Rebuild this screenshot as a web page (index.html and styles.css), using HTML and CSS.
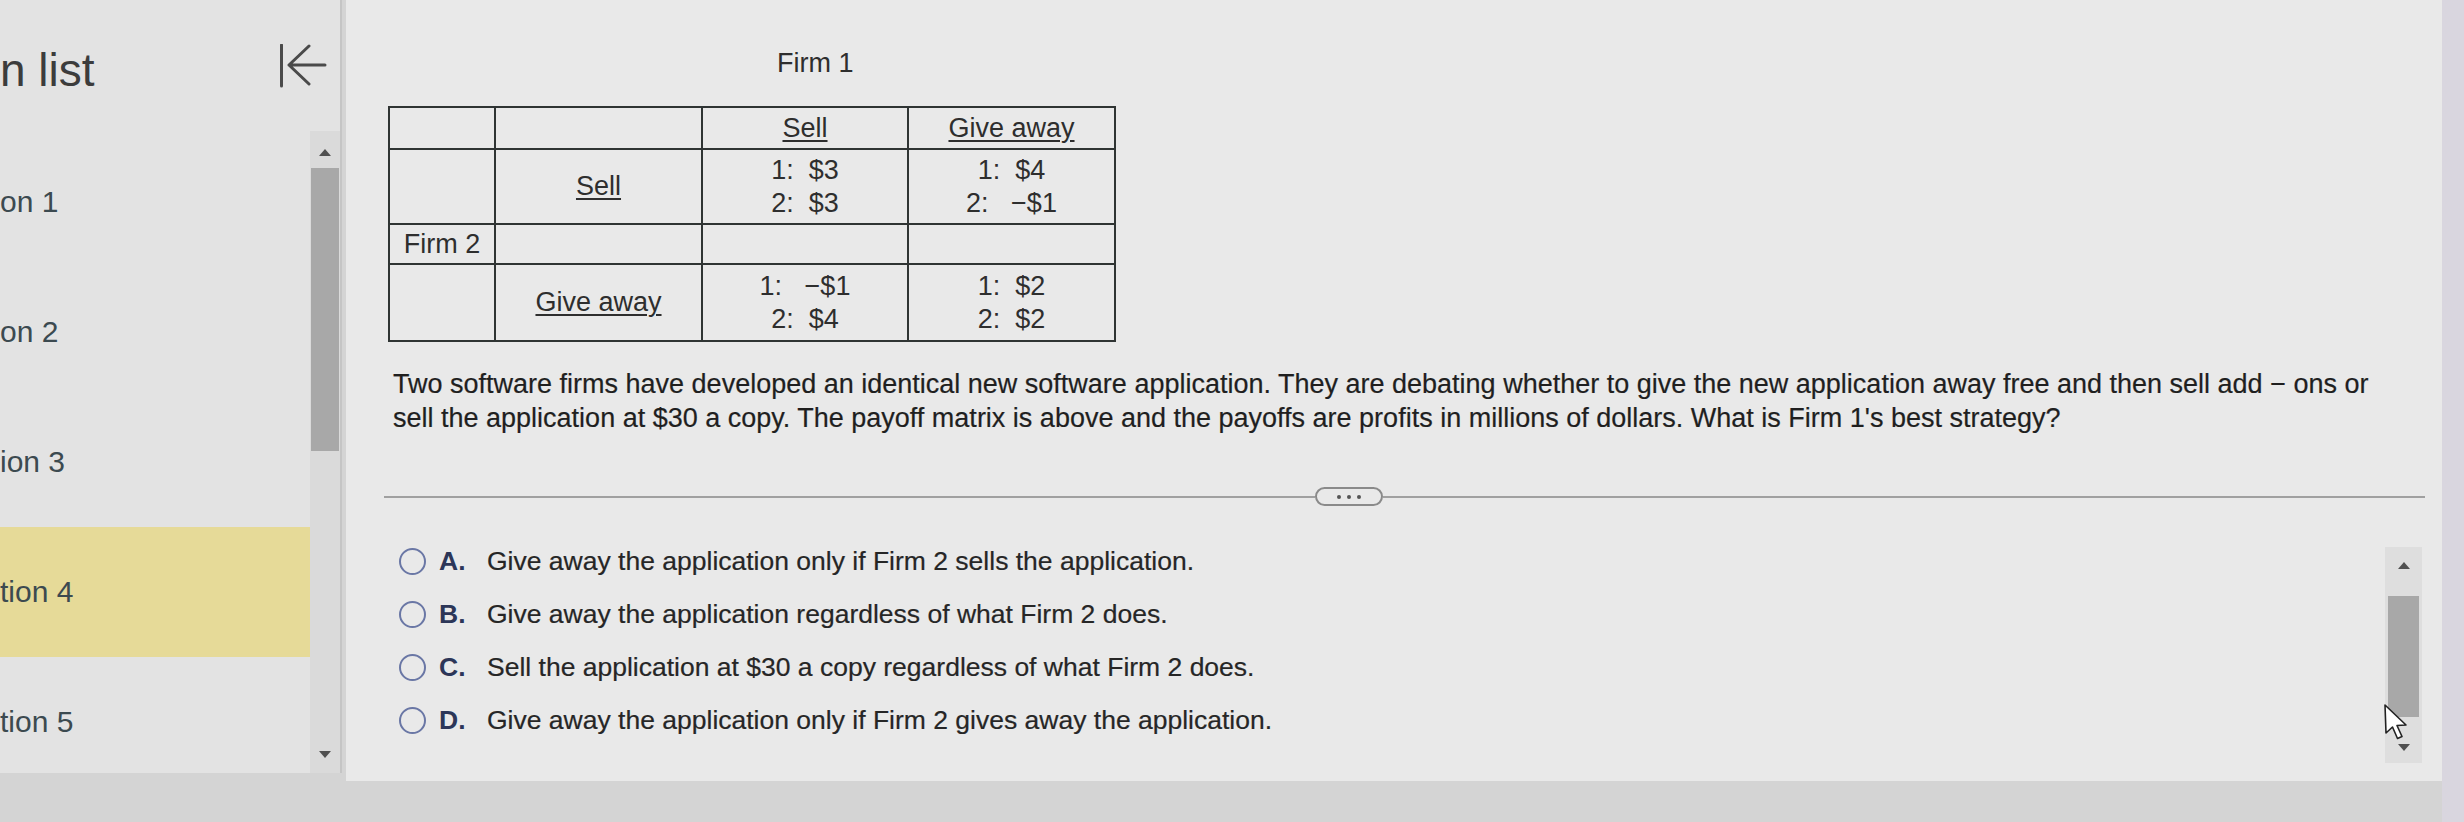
FILE: index.html
```html
<!DOCTYPE html>
<html lang="en">
<head>
<meta charset="utf-8">
<title>Question</title>
<link rel="stylesheet" href="styles.css">
</head>
<body>
<div class="screen">
  <aside class="sidebar">
    <div class="side-head">
      <h1 class="side-title">n list</h1>
      <svg class="collapse-icon" viewBox="0 0 50 44" aria-hidden="true">
        <path d="M3.5 1 V42" />
        <path d="M31 2 L11 21 L31 40 M11 21 H47" />
      </svg>
    </div>
    <div class="side-body">
      <ul class="q-list">
        <li class="q-item">on 1</li>
        <li class="q-item">on 2</li>
        <li class="q-item">ion 3</li>
        <li class="q-item q-current">tion 4</li>
        <li class="q-item">tion 5</li>
      </ul>
      <div class="scrollbar side-scroll">
        <div class="sb-arrow sb-up"></div>
        <div class="sb-thumb"></div>
        <div class="sb-spacer"></div>
        <div class="sb-arrow sb-down"></div>
      </div>
    </div>
  </aside>

  <main class="panel">
    <div class="firm1">Firm 1</div>
    <table class="matrix">
      <colgroup>
        <col class="c-a"><col class="c-b"><col class="c-c"><col class="c-d">
      </colgroup>
      <tr class="r-head">
        <td></td><td></td>
        <td><span class="ul">Sell</span></td>
        <td><span class="ul">Give away</span></td>
      </tr>
      <tr class="r-sell">
        <td></td>
        <td><span class="ul">Sell</span></td>
        <td>1:&nbsp; $3<br>2:&nbsp; $3</td>
        <td>1:&nbsp; $4<br>2:&nbsp;&nbsp; &minus;$1</td>
      </tr>
      <tr class="r-mid">
        <td>Firm 2</td><td></td><td></td><td></td>
      </tr>
      <tr class="r-give">
        <td></td>
        <td><span class="ul">Give away</span></td>
        <td>1:&nbsp;&nbsp; &minus;$1<br>2:&nbsp; $4</td>
        <td>1:&nbsp; $2<br>2:&nbsp; $2</td>
      </tr>
    </table>

    <p class="question">Two software firms have developed an identical new software application. They are debating whether to give the new application away free and then sell add &minus; ons or sell the application at $30 a copy. The payoff matrix is above and the payoffs are profits in millions of dollars. What is Firm 1's best strategy?</p>

    <div class="divider">
      <span class="rule rule-left"></span>
      <button class="more-btn" type="button"><i></i><i></i><i></i></button>
      <span class="rule rule-right"></span>
    </div>

    <div class="answers">
      <ul class="options">
        <li class="option"><span class="radio"></span><span class="opt-letter">A.</span><span class="opt-text">Give away the application only if Firm 2 sells the application.</span></li>
        <li class="option"><span class="radio"></span><span class="opt-letter">B.</span><span class="opt-text">Give away the application regardless of what Firm 2 does.</span></li>
        <li class="option"><span class="radio"></span><span class="opt-letter">C.</span><span class="opt-text">Sell the application at $30 a copy regardless of what Firm 2 does.</span></li>
        <li class="option"><span class="radio"></span><span class="opt-letter">D.</span><span class="opt-text">Give away the application only if Firm 2 gives away the application.</span></li>
      </ul>
      <div class="scrollbar main-scroll">
        <div class="sb-arrow sb-up"></div>
        <div class="sb-thumb"></div>
        <div class="sb-spacer"></div>
        <div class="sb-arrow sb-down"></div>
      </div>
    </div>

    <svg class="cursor" viewBox="0 0 30 42" aria-hidden="true">
      <path d="M2 2 L3 30 L9.5 24 L14.5 35.5 L19 33.5 L14 22.5 L23 22 Z" />
    </svg>
  </main>

  <div class="edge"></div>
</div>
</body>
</html>
```

FILE: styles.css
```css
html, body {
  margin: 0;
  padding: 0;
}

body {
  width: 2464px;
  height: 822px;
  overflow: hidden;
  background: #d4d4d4;
  font-family: "Liberation Sans", Arial, sans-serif;
}

.screen {
  display: flex;
  align-items: flex-start;
  height: 822px;
}

/* ---------- sidebar ---------- */
.sidebar {
  flex: none;
  width: 340px;
  height: 773px;
  background: #e3e3e3;
  border-right: 2px solid #c5c5c5;
  display: flex;
  flex-direction: column;
  overflow: hidden;
}

.side-head {
  flex: none;
  height: 131px;
  display: flex;
  align-items: flex-start;
  justify-content: space-between;
}

.side-title {
  margin: 40px 0 0 0;
  font-size: 46px;
  line-height: 60px;
  font-weight: normal;
  color: #3c3c3c;
  white-space: nowrap;
}

.collapse-icon {
  width: 50px;
  height: 44px;
  margin: 44px 12px 0 0;
  fill: none;
  stroke: #4a4a4a;
  stroke-width: 3;
  stroke-linecap: round;
  stroke-linejoin: round;
}

.side-body {
  flex: 1;
  display: flex;
  min-height: 0;
}

.q-list {
  flex: 1;
  list-style: none;
  margin: 0;
  padding: 6px 0 0 0;
}

.q-item {
  height: 130px;
  line-height: 130px;
  font-size: 30px;
  color: #3c4a50;
  white-space: nowrap;
}

.q-current {
  background: #e6da98;
}

/* ---------- scrollbars ---------- */
.scrollbar {
  flex: none;
  display: flex;
  flex-direction: column;
  align-items: center;
  background: #dadada;
}

.sb-arrow {
  width: 0;
  height: 0;
  border-left: 6px solid transparent;
  border-right: 6px solid transparent;
  flex: none;
}

.sb-up {
  border-bottom: 7px solid #505050;
}

.sb-down {
  border-top: 7px solid #505050;
}

.sb-thumb {
  flex: none;
  background: #a8a8a8;
}

.sb-spacer {
  flex: 1;
}

.side-scroll {
  width: 30px;
}

.side-scroll .sb-up {
  margin-top: 18px;
}

.side-scroll .sb-thumb {
  width: 28px;
  height: 283px;
  margin-top: 12px;
}

.side-scroll .sb-down {
  margin-bottom: 15px;
}

.main-scroll {
  width: 37px;
  height: 216px;
  margin-top: 12px;
  background: #dedede;
}

.main-scroll .sb-up {
  margin-top: 15px;
}

.main-scroll .sb-thumb {
  width: 31px;
  height: 121px;
  margin-top: 27px;
}

.main-scroll .sb-down {
  margin-bottom: 12px;
}

/* ---------- main panel ---------- */
.panel {
  flex: none;
  position: relative;
  box-sizing: border-box;
  width: 2096px;
  height: 781px;
  margin-left: 4px;
  padding: 47px 0 0 42px;
  background: #e9e9e9;
  color: #2a2a2a;
}

.firm1 {
  margin-left: 389px;
  font-size: 27px;
  line-height: 32px;
  color: #2e2e2e;
}

.matrix {
  margin-top: 27px;
  border-collapse: collapse;
  table-layout: fixed;
  width: 726px;
}

.c-a { width: 106px; }
.c-b { width: 207px; }
.c-c { width: 206px; }
.c-d { width: 207px; }

.matrix td {
  border: 2px solid #2f3433;
  padding: 0;
  text-align: center;
  vertical-align: middle;
  font-size: 27px;
  line-height: 33px;
  color: #2e2e2e;
  white-space: nowrap;
}

.r-head { height: 42px; }
.r-sell { height: 75px; }
.r-mid { height: 40px; }
.r-give { height: 77px; }

.ul {
  text-decoration: underline;
  text-decoration-thickness: 1.5px;
  text-underline-offset: 3px;
}

.question {
  margin: 25px 0 0 5px;
  max-width: 2010px;
  font-size: 27px;
  line-height: 34px;
  color: #1f1f1f;
  -webkit-text-stroke: 0.2px #1f1f1f;
}

.divider {
  display: flex;
  align-items: center;
  height: 19px;
  margin: 52px 17px 0 -4px;
}

.rule {
  height: 2px;
  background: #a0a0a0;
}

.rule-left {
  flex: none;
  width: 931px;
}

.rule-right {
  flex: 1;
}

.more-btn {
  flex: none;
  box-sizing: border-box;
  width: 68px;
  height: 19px;
  padding: 0;
  border: 2px solid #8a8a8a;
  border-radius: 10px;
  background: #e9e9e9;
  display: flex;
  align-items: center;
  justify-content: center;
  gap: 6px;
}

.more-btn i {
  display: block;
  width: 4px;
  height: 4px;
  border-radius: 50%;
  background: #555;
}

.answers {
  display: flex;
  align-items: flex-start;
  margin: 29px 20px 0 0;
}

.options {
  flex: 1;
  list-style: none;
  margin: 0 0 0 11px;
  padding: 0;
}

.option {
  display: flex;
  align-items: center;
  height: 53px;
  font-size: 26.5px;
  color: #262626;
  -webkit-text-stroke: 0.2px #262626;
  white-space: nowrap;
}

.radio {
  flex: none;
  box-sizing: border-box;
  width: 27px;
  height: 27px;
  margin-right: 13px;
  border: 2.5px solid #6a77a5;
  border-radius: 50%;
}

.opt-letter {
  flex: none;
  width: 48px;
  font-weight: bold;
  color: #2c3658;
  -webkit-text-stroke: 0;
}

.cursor {
  position: absolute;
  left: 2037px;
  top: 703px;
  width: 30px;
  height: 42px;
  fill: #ffffff;
  stroke: #222;
  stroke-width: 1.6;
  stroke-linejoin: round;
}

.edge {
  flex: 1;
  height: 822px;
  background: #d9d6df;
}
```
